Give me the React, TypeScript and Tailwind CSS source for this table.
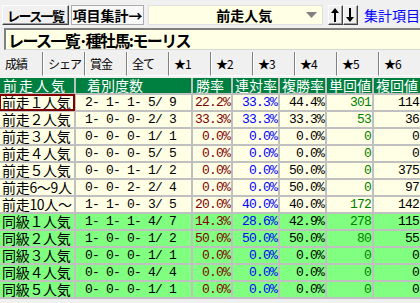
import React from "react";

type Row = {
  name: string;
  rec: string;
  win: string;
  ren: string;
  fuku: string;
  tan: string;
  fk: string;
  green?: boolean;
};

const rows: Row[] = [
  { name: "前走１人気", rec: " 2- 1- 1- 5/ 9", win: "22.2%", ren: "33.3%", fuku: "44.4%", tan: "301", fk: "114" },
  { name: "前走２人気", rec: " 1- 0- 0- 2/ 3", win: "33.3%", ren: "33.3%", fuku: "33.3%", tan: "53", fk: "36" },
  { name: "前走３人気", rec: " 0- 0- 0- 1/ 1", win: "0.0%", ren: "0.0%", fuku: "0.0%", tan: "0", fk: "0" },
  { name: "前走４人気", rec: " 0- 0- 0- 5/ 5", win: "0.0%", ren: "0.0%", fuku: "0.0%", tan: "0", fk: "0" },
  { name: "前走５人気", rec: " 0- 0- 1- 1/ 2", win: "0.0%", ren: "0.0%", fuku: "50.0%", tan: "0", fk: "375" },
  { name: "前走6～9人", rec: " 0- 0- 2- 2/ 4", win: "0.0%", ren: "0.0%", fuku: "50.0%", tan: "0", fk: "97" },
  { name: "前走10人～", rec: " 1- 1- 0- 3/ 5", win: "20.0%", ren: "40.0%", fuku: "40.0%", tan: "172", fk: "142" },
  { name: "同級１人気", rec: " 1- 1- 1- 4/ 7", win: "14.3%", ren: "28.6%", fuku: "42.9%", tan: "278", fk: "115", green: true },
  { name: "同級２人気", rec: " 1- 0- 0- 1/ 2", win: "50.0%", ren: "50.0%", fuku: "50.0%", tan: "80", fk: "55", green: true },
  { name: "同級３人気", rec: " 0- 0- 0- 1/ 1", win: "0.0%", ren: "0.0%", fuku: "0.0%", tan: "0", fk: "0", green: true },
  { name: "同級４人気", rec: " 0- 0- 0- 4/ 4", win: "0.0%", ren: "0.0%", fuku: "0.0%", tan: "0", fk: "0", green: true },
  { name: "同級５人気", rec: " 0- 0- 0- 1/ 1", win: "0.0%", ren: "0.0%", fuku: "0.0%", tan: "0", fk: "0", green: true },
];

const tabs = ["成績", "シェア", "賞金", "全て", "★1", "★2", "★3", "★4", "★5", "★6"];

const raised =
  "border border-t-white border-l-white border-r-[#404040] border-b-[#404040] shadow-[inset_-1px_-1px_0_#a0a0a0]";

const num =
  "font-['Liberation_Mono',monospace] text-[13px] tracking-[-0.8px] whitespace-pre flex items-center justify-end pr-[1px]";

const head = "h-[15px] bg-[#008040] text-white leading-[15px] whitespace-nowrap";

function Arrow({ up }: { up?: boolean }) {
  return (
    <svg width="8" height="14" viewBox="0 0 8 14">
      {up ? (
        <>
          <polygon points="4,0 8,5 0,5" fill="#000" />
          <rect x="3" y="4" width="2" height="10" fill="#000" />
        </>
      ) : (
        <>
          <polygon points="4,14 8,9 0,9" fill="#000" />
          <rect x="3" y="0" width="2" height="10" fill="#000" />
        </>
      )}
    </svg>
  );
}

export default function App() {
  return (
    <div className="w-[420px] h-[303px] overflow-hidden bg-[#f0f0f0] font-['Noto_Sans_CJK_JP',sans-serif] text-black">
      {/* toolbar */}
      <div className="flex items-start h-[28px] pt-[5px] pl-[2px] whitespace-nowrap">
        <div className={`w-[71px] h-[20px] flex items-center pl-[4px] text-[13px] font-bold leading-none tracking-[-1.6px] bg-[#f0f0f0] ${raised}`}>
          レース一覧
        </div>
        <div className="ml-[2px] w-[78px] h-[20px] flex items-center justify-center text-[14px] font-bold leading-none bg-[#f8f8f8] border border-[#adadad]">
          項目集計→
        </div>
        <div className="ml-[4px] w-[186px] h-[20px] flex items-center bg-[#ffffe6] border border-[#e0e0e0]">
          <span className="ml-[67px] text-[14px] font-bold leading-none">前走人気</span>
          <svg className="ml-auto mr-[5px]" width="11" height="6" viewBox="0 0 11 6">
            <polygon points="0,0 11,0 5.5,6" fill="#808080" />
          </svg>
        </div>
        <div className={`ml-[5px] w-[16px] h-[20px] flex items-center justify-center bg-[#f0f0f0] ${raised}`}>
          <Arrow up />
        </div>
        <div className={`w-[16px] h-[20px] flex items-center justify-center bg-[#f0f0f0] ${raised}`}>
          <Arrow />
        </div>
        <span className="ml-[6px] mt-[1px] text-[14px] leading-[18px] text-[#0000ff]">集計項目</span>
      </div>

      {/* title */}
      <div className="ml-[4px] h-[22px] bg-[#ffffe6] border-t-2 border-l-2 border-[#808080] border-b border-b-[#d8d8d8] flex items-center pl-[2px]">
        <span className="text-[16px] font-bold leading-none tracking-[-1.6px]">レース一覧･種牡馬:モーリス</span>
      </div>

      {/* tabs */}
      <div className="mt-[2px] grid grid-cols-10 h-[24px]">
        {tabs.map((t, i) => (
          <div
            key={t}
            className={`flex items-center pl-[5px] text-[12px] leading-none tracking-[-1px] whitespace-nowrap overflow-hidden ${
              i === 0 ? "" : "border-l border-[#808080] shadow-[inset_1px_0_0_#ffffff] border-b border-b-white"
            }`}
          >
            {t}
          </div>
        ))}
      </div>

      {/* table */}
      <div className="mt-[2px] grid grid-cols-[74px_115px_38px_45px_45px_45px_46px] gap-[2px] bg-[#c0c0c0] pb-[2px] text-[14px]">
        <div className={`${head} pl-[3px] tracking-[2px]`}>前走人気</div>
        <div className={`${head} pl-[11px]`}>着別度数</div>
        <div className={`${head} pl-[3px]`}>勝率</div>
        <div className={`${head} pl-[2px]`}>連対率</div>
        <div className={`${head} pl-[2px]`}>複勝率</div>
        <div className={`${head} pl-[2px]`}>単回値</div>
        <div className={`${head} pl-[2px]`}>複回値</div>

        {rows.map((r, i) => {
          const bg = r.green ? "bg-[#80ff80]" : "bg-[#ffffe6]";
          return (
            <React.Fragment key={r.name}>
              <div
                className={`h-[15px] ${bg} leading-[15px] pl-[2px] whitespace-nowrap tracking-[-0.3px] ${
                  i === 0 ? "outline-2 outline-[#800000] -outline-offset-1" : ""
                }`}
              >
                {r.name}
              </div>
              <div className={`h-[15px] ${bg} font-['Liberation_Mono',monospace] text-[13px] tracking-[-0.8px] whitespace-pre flex items-center pl-[2px]`}>
                {r.rec}
              </div>
              <div className={`h-[15px] ${bg} ${num} text-[#800000]`}>{r.win}</div>
              <div className={`h-[15px] ${bg} ${num} text-[#0000ff]`}>{r.ren}</div>
              <div className={`h-[15px] ${bg} ${num}`}>{r.fuku}</div>
              <div className={`h-[15px] ${bg} ${num} text-[#008000]`}>{r.tan}</div>
              <div className={`h-[15px] ${bg} ${num}`}>{r.fk}</div>
            </React.Fragment>
          );
        })}
      </div>
    </div>
  );
}
